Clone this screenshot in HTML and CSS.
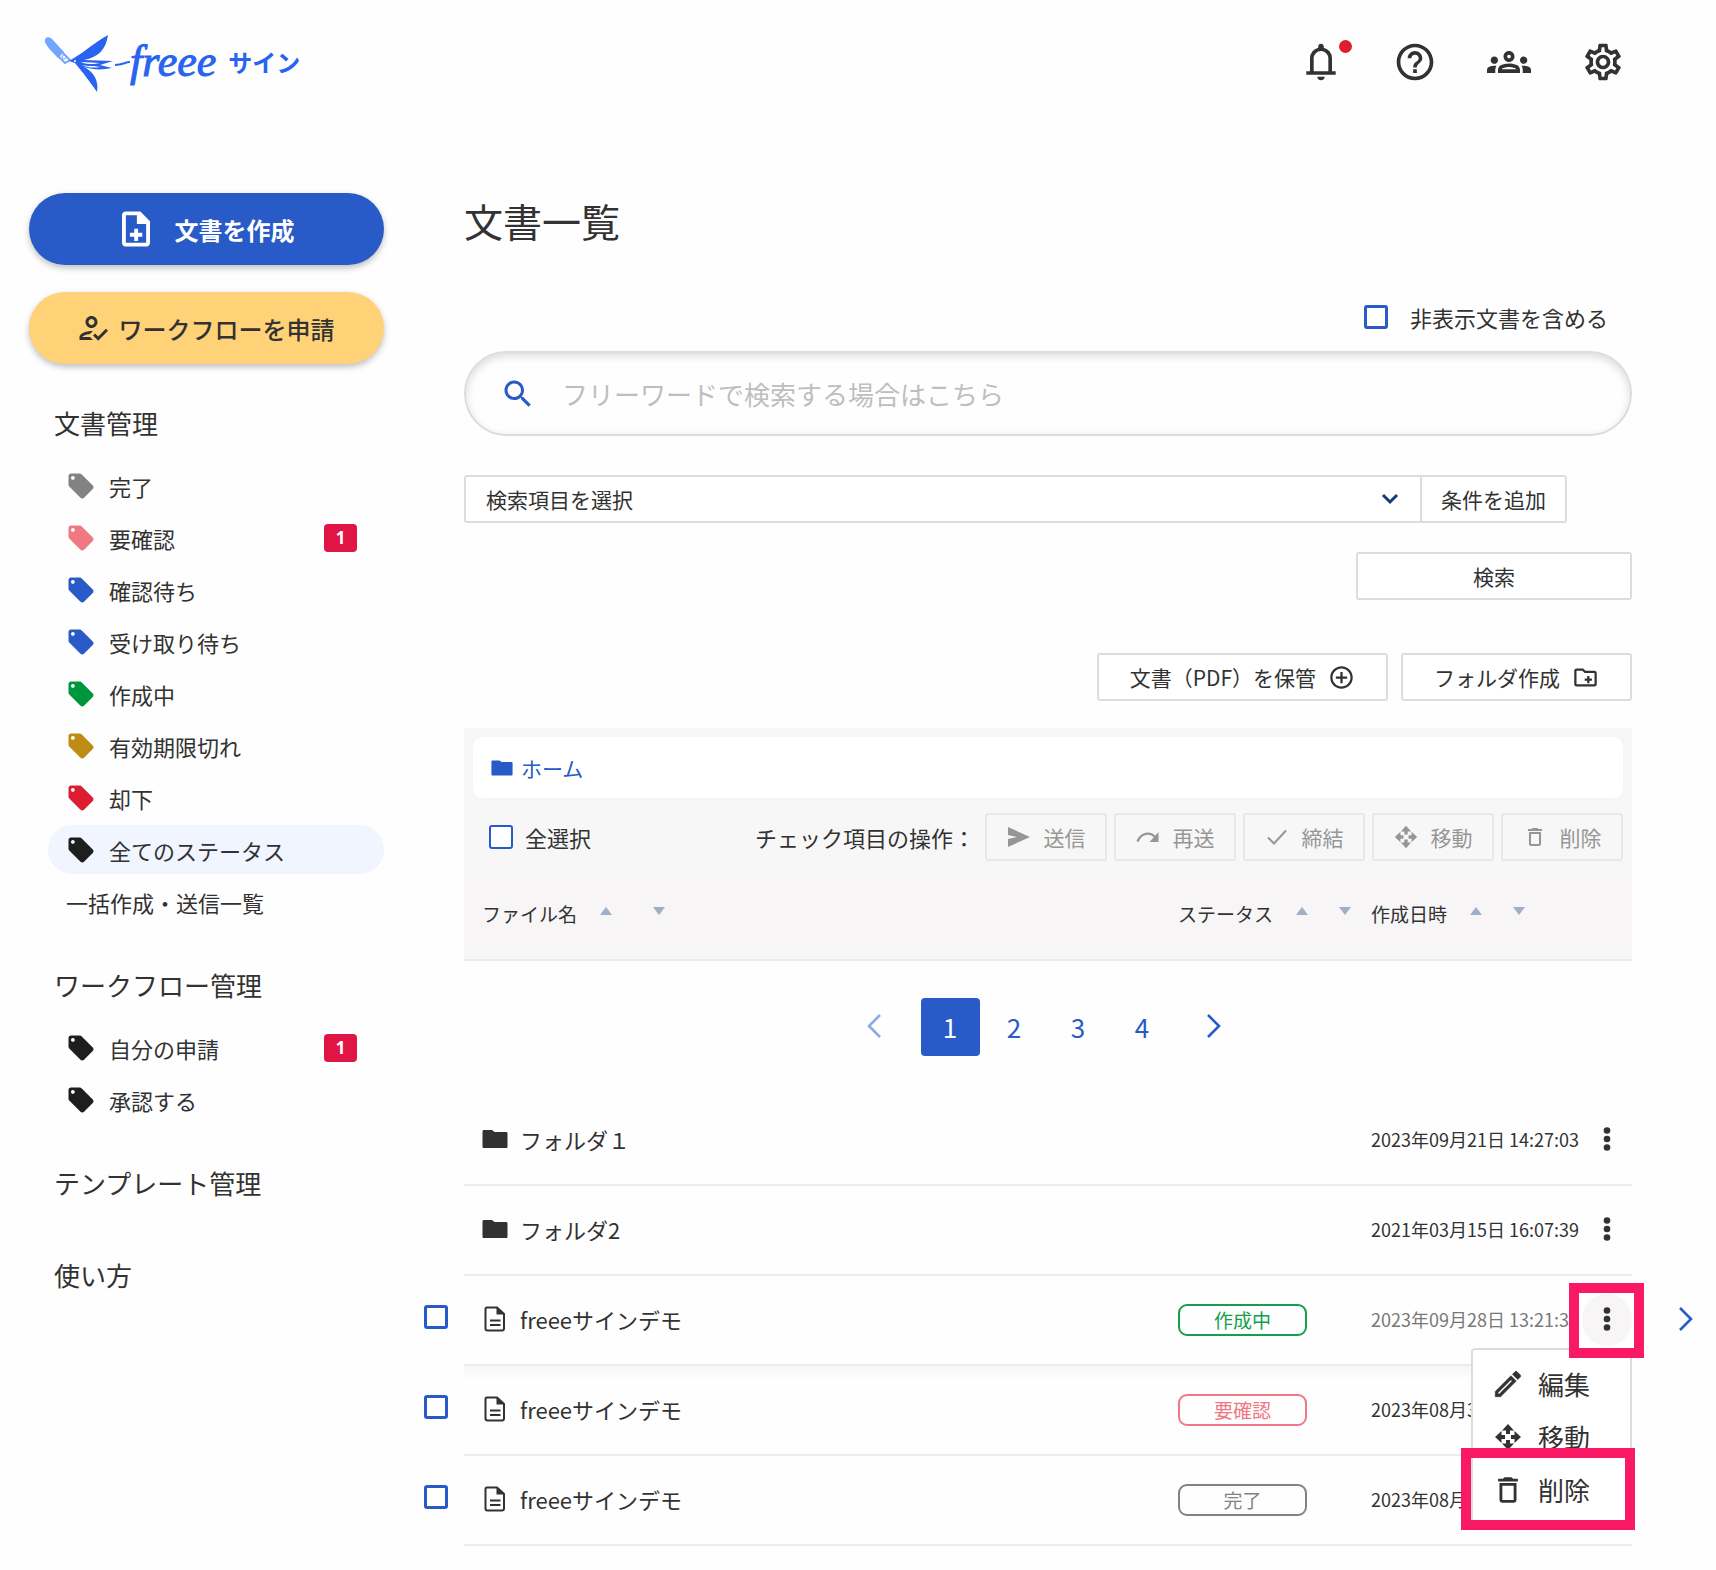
FILE: index.html
```html
<!DOCTYPE html>
<html lang="ja">
<head>
    <meta charset="utf-8">
    <title>文書一覧 | freee サイン</title>
    <meta name="viewport" content="width=device-width, initial-scale=1">
    <link rel="stylesheet" href="styles.css">
</head>
<body>
    <!-- Icon sprite -->
    <svg class="sprite" aria-hidden="true">
        <symbol id="i-bell" viewBox="0 0 24 24"><path d="M4 19v-2h2v-7q0-2.075 1.25-3.687Q8.5 4.7 10.5 4.2v-.7q0-.625.438-1.063Q11.375 2 12 2t1.063.437Q13.5 2.875 13.5 3.5v.7q2 .5 3.25 2.113Q18 7.925 18 10v7h2v2Zm8 3q-.825 0-1.412-.587Q10 20.825 10 20h4q0 .825-.587 1.413Q12.825 22 12 22Zm-4-5h8v-7q0-1.65-1.175-2.825Q13.65 6 12 6q-1.65 0-2.825 1.175Q8 8.35 8 10Z"/></symbol>
        <symbol id="i-help" viewBox="0 0 24 24"><path d="M11 18h2v-2h-2v2zm1-16C6.48 2 2 6.48 2 12s4.48 10 10 10 10-4.48 10-10S17.52 2 12 2zm0 18c-4.41 0-8-3.59-8-8s3.59-8 8-8 8 3.59 8 8-3.59 8-8 8zm0-14c-2.21 0-4 1.79-4 4h2c0-1.1.9-2 2-2s2 .9 2 2c0 2-3 1.75-3 5h2c0-2.25 3-2.5 3-5 0-2.21-1.79-4-4-4z"/></symbol>
        <symbol id="i-groups" viewBox="0 0 24 24"><path d="M4 13c1.1 0 2-.9 2-2s-.9-2-2-2-2 .9-2 2 .9 2 2 2zm1.13 1.1C4.76 14.04 4.39 14 4 14c-.99 0-1.93.21-2.78.58C.48 14.9 0 15.62 0 16.43V18h4.5v-1.61c0-.83.23-1.61.63-2.29zM20 13c1.1 0 2-.9 2-2s-.9-2-2-2-2 .9-2 2 .9 2 2 2zm4 3.43c0-.81-.48-1.53-1.22-1.85C21.93 14.21 20.99 14 20 14c-.39 0-.76.04-1.13.1.4.68.63 1.46.63 2.29V18H24v-1.57zm-7.76-2.78C15.07 13.13 13.63 12.75 12 12.75s-3.07.39-4.24.9C6.68 14.13 6 15.21 6 16.39V18h12v-1.61c0-1.18-.68-2.26-1.76-2.74zM8.07 16c.09-.23.13-.39.91-.69.97-.38 1.99-.56 3.02-.56s2.05.18 3.02.56c.77.3.81.46.91.69H8.07zM12 8c.55 0 1 .45 1 1s-.45 1-1 1-1-.45-1-1 .45-1 1-1m0-2c-1.66 0-3 1.34-3 3s1.34 3 3 3 3-1.34 3-3-1.34-3-3-3z"/></symbol>
        <symbol id="i-gear" viewBox="0 0 24 24"><path d="M19.43 12.98c.04-.32.07-.64.07-.98 0-.34-.03-.66-.07-.98l2.11-1.65c.19-.15.24-.42.12-.64l-2-3.46c-.09-.16-.26-.25-.44-.25-.06 0-.12.01-.17.03l-2.49 1c-.52-.4-1.08-.73-1.69-.98l-.38-2.65C14.46 2.18 14.25 2 14 2h-4c-.25 0-.46.18-.49.42l-.38 2.65c-.61.25-1.17.59-1.69.98l-2.49-1c-.06-.02-.12-.03-.18-.03-.17 0-.34.09-.43.25l-2 3.46c-.13.22-.07.49.12.64l2.11 1.65c-.04.32-.07.65-.07.98 0 .33.03.66.07.98l-2.11 1.65c-.19.15-.24.42-.12.64l2 3.46c.09.16.26.25.44.25.06 0 .12-.01.17-.03l2.49-1c.52.4 1.08.73 1.69.98l.38 2.65c.03.24.24.42.49.42h4c.25 0 .46-.18.49-.42l.38-2.65c.61-.25 1.17-.59 1.69-.98l2.49 1c.06.02.12.03.18.03.17 0 .34-.09.43-.25l2-3.46c.12-.22.07-.49-.12-.64l-2.11-1.65zm-1.98-1.71c.04.31.05.52.05.73 0 .21-.02.43-.05.73l-.14 1.13.89.7 1.08.84-.7 1.21-1.27-.51-1.04-.42-.9.68c-.43.32-.84.56-1.25.73l-1.06.43-.16 1.13-.2 1.35h-1.4l-.19-1.35-.16-1.13-1.06-.43c-.43-.18-.83-.41-1.23-.71l-.91-.7-1.06.43-1.27.51-.7-1.21 1.08-.84.89-.7-.14-1.13c-.03-.31-.05-.54-.05-.74s.02-.43.05-.73l.14-1.13-.89-.7-1.08-.84.7-1.21 1.27.51 1.04.42.9-.68c.43-.32.84-.56 1.25-.73l1.06-.43.16-1.13.2-1.35h1.39l.19 1.35.16 1.13 1.06.43c.43.18.83.41 1.23.71l.91.7 1.06-.43 1.27-.51.7 1.21-1.07.85-.89.7.14 1.13zM12 8c-2.21 0-4 1.79-4 4s1.79 4 4 4 4-1.79 4-4-1.79-4-4-4zm0 6c-1.1 0-2-.9-2-2s.9-2 2-2 2 .9 2 2-.9 2-2 2z"/></symbol>
        <symbol id="i-note-add" viewBox="0 0 24 24"><path d="M13.200 11.800h-2.200v2.400H8.500v2.200H11v2.400h2.200v-2.400h2.400v-2.200h-2.400zM14.500 2H6c-1.100 0-2 .9-2 2v16c0 1.100.89 2 2 2h12c1.100 0 2-.9 2-2V7.500L14.500 2zM17.800 19.800H6.200V4.200H12.500V9.200h5.300v10.600z"/></symbol>
        <symbol id="i-approve" viewBox="0 0 24 24"><path d="M11 12c2.210 0 4-1.790 4-4s-1.790-4-4-4-4 1.790-4 4 1.790 4 4 4zm0-6c1.100 0 2 .9 2 2s-.9 2-2 2-2-.9-2-2 .9-2 2-2zM5 18c.2-.63 2.570-1.680 4.960-1.940l2.040-2c-.39-.04-.68-.06-1-.06-2.670 0-8 1.340-8 4v2h9l-2-2H5zM20.600 12.500l-5.130 5.170-2.070-2.080L12 17l3.470 3.500L22 13.910z"/></symbol>
        <symbol id="i-tag" viewBox="0 0 24 24"><path d="M21.410 11.580l-9-9C12.050 2.220 11.550 2 11 2H4c-1.100 0-2 .9-2 2v7c0 .55.22 1.050.59 1.420l9 9c.36.36.86.58 1.410.58.55 0 1.050-.22 1.410-.59l7-7c.37-.36.59-.86.59-1.410 0-.55-.23-1.060-.59-1.420zM5.500 7C4.670 7 4 6.330 4 5.500S4.670 4 5.500 4 7 4.670 7 5.500 6.330 7 5.500 7z"/></symbol>
        <symbol id="i-search" viewBox="0 0 24 24"><path d="M15.500 14h-.79l-.28-.27C15.410 12.590 16 11.110 16 9.500 16 5.910 13.090 3 9.500 3S3 5.910 3 9.500 5.910 16 9.500 16c1.610 0 3.090-.59 4.230-1.570l.27.28v.79l5 4.990L20.490 19l-4.990-5zm-6 0C7.010 14 5 11.990 5 9.500S7.010 5 9.500 5 14 7.010 14 9.500 11.990 14 9.500 14z"/></symbol>
        <symbol id="i-down" viewBox="0 0 18 12"><path d="M2 2l7 7 7-7" fill="none" stroke="currentColor" stroke-width="3"/></symbol>
        <symbol id="i-plus" viewBox="0 0 24 24"><path d="M13 7h-2v4H7v2h4v4h2v-4h4v-2h-4V7zm-1-5C6.480 2 2 6.480 2 12s4.480 10 10 10 10-4.480 10-10S17.520 2 12 2zm0 18c-4.410 0-8-3.590-8-8s3.590-8 8-8 8 3.590 8 8-3.590 8-8 8z"/></symbol>
        <symbol id="i-folder-add" viewBox="0 0 24 24"><path d="M20 6h-8l-2-2H4c-1.110 0-2 .89-2 2v12c0 1.110.89 2 2 2h16c1.110 0 2-.89 2-2V8c0-1.110-.89-2-2-2zm0 12H4V6h5.170l2 2H20v10zm-6.500-1h2v-2.200h2.200v-2h-2.200v-2.200h-2v2.200h-2.200v2h2.200z"/></symbol>
        <symbol id="i-folder" viewBox="0 0 26 20"><path d="M2 1h8l2.500 2H24c1 0 1.500.6 1.500 1.500v13c0 1-.5 1.500-1.500 1.500H2c-1 0-1.500-.5-1.500-1.500v-15C.5 1.600 1 1 2 1z"/></symbol>
        <symbol id="i-doc" viewBox="0 0 22 26"><path d="M3 1.500h10l7 6.500v14.500c0 1.100-.9 2-2 2H3.500c-1.100 0-2-.9-2-2V3c0-.8.700-1.500 1.500-1.500z" fill="none" stroke="currentColor" stroke-width="2"/><path d="M12.500 1v7.500H21z"/><path d="M6 14.500h10.500M6 19h10.500" stroke="currentColor" stroke-width="2"/></symbol>
        <symbol id="i-send" viewBox="0 0 24 22"><path d="M1 1l22 10L1 21v-8l9-2-9-2z"/></symbol>
        <symbol id="i-redo" viewBox="0 0 24 16"><path d="M1.500 12.500C5 4 14 2 19.500 8.500" fill="none" stroke="currentColor" stroke-width="2.200"/><path d="M22.500 3v10H13.500z"/></symbol>
        <symbol id="i-check" viewBox="0 0 24 20"><path d="M3 10.500l6 6L21 3.500" fill="none" stroke="currentColor" stroke-width="2"/></symbol>
        <symbol id="i-move" viewBox="0 0 28 28"><path d="M14 1l6 6.500h-4V11h-4V7.500H8zM14 27l6-6.500h-4V17h-4v3.500H8zM1 14l6.500-6v4H11v4H7.500v4zM27 14l-6.500-6v4H17v4h3.500v4z"/></symbol>
        <symbol id="i-delete" viewBox="0 0 24 24"><path d="M16 9v10H8V9h8m-1.500-6h-5l-1 1H5v2h14V4h-3.500l-1-1zM18 7H6v12c0 1.100.9 2 2 2h8c1.100 0 2-.9 2-2V7z"/></symbol>
        <symbol id="i-edit" viewBox="0 0 24 24"><path d="M14.060 9.020l.92.92L5.920 19H5v-.92l9.060-9.060M17.660 3c-.25 0-.51.1-.7.29l-1.830 1.830 3.750 3.750 1.830-1.830c.39-.39.39-1.020 0-1.410l-2.340-2.340c-.2-.2-.45-.29-.71-.29zm-3.600 3.190L3 17.250V21h3.750L17.810 9.940l-3.750-3.750z" stroke="currentColor" stroke-width=".4"/></symbol>
        <symbol id="i-up-tri" viewBox="0 0 12 8"><path d="M6 0l6 8H0z"/></symbol>
        <symbol id="i-down-tri" viewBox="0 0 12 8"><path d="M0 0h12L6 8z"/></symbol>
        <symbol id="i-prev" viewBox="0 0 16 26"><path d="M14 2L3 13l11 11" fill="none" stroke="currentColor" stroke-width="2.600"/></symbol>
        <symbol id="i-next" viewBox="0 0 16 26"><path d="M2 2l11 11L2 24" fill="none" stroke="currentColor" stroke-width="2.600"/></symbol>
        <symbol id="i-more" viewBox="0 0 8 24"><circle cx="4" cy="3.500" r="3.300"/><circle cx="4" cy="12" r="3.300"/><circle cx="4" cy="20.500" r="3.300"/></symbol>
    </svg>

    <header class="site-header">
        <a class="logo" href="#">
            <svg class="logo-bird" viewBox="0 0 86 68">
                <path d="M1 14C0 9 5 8 8 11L20 24l-6 6C9 25 3 19 1 14z" fill="#73a5ff"/>
                <path d="M18 24l8 8-5 3-7-7z" fill="none" stroke="#73a5ff" stroke-width="2"/>
                <circle cx="20" cy="29" r="2" fill="none" stroke="#73a5ff"/>
                <path d="M25 33l5-3C42 23 48 16 64 7c-2 14-9 22-24 25l29 1-13 4 12 3c-9 2-19 2-28-1 10 5 15 14 13 25C46 54 40 46 31 35z" fill="#2864f0"/>
                <path d="M37 34l19 1-6 1c-5 0-9 0-13-2zM38 37c6 3 13 3 18 2l-6-1c-4 0-8 0-12-1z" fill="#fff"/>
                <circle cx="31" cy="33" r="1" fill="#fff"/>
                <path d="M71 37c8 0 10-3 15-3" fill="none" stroke="#2864f0" stroke-width="2"/>
            </svg>
            <span class="logo-name">freee</span>
            <span class="logo-product">サイン</span>
        </a>
        <div class="header-actions">
            <button class="icon-button" type="button" aria-label="通知"><svg class="icon-lg"><use href="#i-bell"/></svg><span class="notice-dot"></span></button>
            <button class="icon-button" type="button" aria-label="ヘルプ"><svg class="icon-lg"><use href="#i-help"/></svg></button>
            <button class="icon-button" type="button" aria-label="メンバー"><svg class="icon-lg"><use href="#i-groups"/></svg></button>
            <button class="icon-button" type="button" aria-label="設定"><svg class="icon-lg"><use href="#i-gear"/></svg></button>
        </div>
    </header>

    <div class="page">
        <aside class="sidebar">
            <button class="pill-button primary" type="button"><svg class="icon-note"><use href="#i-note-add"/></svg>文書を作成</button>
            <button class="pill-button secondary" type="button"><svg class="icon-approve"><use href="#i-approve"/></svg>ワークフローを申請</button>
            <nav>
                <h2>文書管理</h2>
                <ul class="nav-list">
                    <li><a href="#"><svg class="tag gray"><use href="#i-tag"/></svg>完了</a></li>
                    <li><a href="#"><svg class="tag pink"><use href="#i-tag"/></svg>要確認<span class="badge">1</span></a></li>
                    <li><a href="#"><svg class="tag blue"><use href="#i-tag"/></svg>確認待ち</a></li>
                    <li><a href="#"><svg class="tag blue"><use href="#i-tag"/></svg>受け取り待ち</a></li>
                    <li><a href="#"><svg class="tag green"><use href="#i-tag"/></svg>作成中</a></li>
                    <li><a href="#"><svg class="tag gold"><use href="#i-tag"/></svg>有効期限切れ</a></li>
                    <li><a href="#"><svg class="tag red"><use href="#i-tag"/></svg>却下</a></li>
                    <li><a class="active" href="#"><svg class="tag"><use href="#i-tag"/></svg>全てのステータス</a></li>
                    <li><a href="#">一括作成・送信一覧</a></li>
                </ul>
                <h2>ワークフロー管理</h2>
                <ul class="nav-list">
                    <li><a href="#"><svg class="tag"><use href="#i-tag"/></svg>自分の申請<span class="badge">1</span></a></li>
                    <li><a href="#"><svg class="tag"><use href="#i-tag"/></svg>承認する</a></li>
                </ul>
                <h2><a href="#">テンプレート管理</a></h2>
                <h2 class="nav-help"><a href="#">使い方</a></h2>
            </nav>
        </aside>

        <main class="main">
            <h1>文書一覧</h1>
            <label class="hidden-toggle"><input type="checkbox" class="checkbox">非表示文書を含める</label>
            <div class="search-box">
                <svg class="icon-search"><use href="#i-search"/></svg>
                <input type="search" placeholder="フリーワードで検索する場合はこちら" aria-label="フリーワード">
            </div>
            <div class="filter-row">
                <div class="select-wrap">
                    <select aria-label="検索項目">
                        <option>検索項目を選択</option>
                    </select>
                    <svg class="select-arrow"><use href="#i-down"/></svg>
                </div>
                <button class="button add-filter" type="button">条件を追加</button>
            </div>
            <div class="submit-row">
                <button class="button submit" type="submit">検索</button>
            </div>
            <div class="create-row">
                <button class="button" type="button">文書（PDF）を保管<svg class="icon-md"><use href="#i-plus"/></svg></button>
                <button class="button" type="button">フォルダ作成<svg class="icon-md"><use href="#i-folder-add"/></svg></button>
            </div>

            <div class="list-head">
                <div class="breadcrumb"><a href="#"><svg class="icon-home"><use href="#i-folder"/></svg>ホーム</a></div>
                <div class="toolbar">
                    <label class="select-all"><input type="checkbox" class="checkbox thin">全選択</label>
                    <span class="toolbar-label">チェック項目の操作：</span>
                    <div class="toolbar-buttons">
                        <button class="button" type="button" disabled><svg class="icon-sm"><use href="#i-send"/></svg>送信</button>
                        <button class="button" type="button" disabled><svg class="icon-sm"><use href="#i-redo"/></svg>再送</button>
                        <button class="button" type="button" disabled><svg class="icon-sm"><use href="#i-check"/></svg>締結</button>
                        <button class="button" type="button" disabled><svg class="icon-sm"><use href="#i-move"/></svg>移動</button>
                        <button class="button" type="button" disabled><svg class="icon-sm"><use href="#i-delete"/></svg>削除</button>
                    </div>
                </div>
            </div>

            <table class="documents">
                <thead>
                    <tr>
                        <td class="col-check"></td>
                        <th class="col-name"><div class="sort">ファイル名<button type="button" aria-label="昇順"><svg><use href="#i-up-tri"/></svg></button><button type="button" aria-label="降順"><svg><use href="#i-down-tri"/></svg></button></div></th>
                        <th class="col-status"><div class="sort">ステータス<button type="button" aria-label="昇順"><svg><use href="#i-up-tri"/></svg></button><button type="button" aria-label="降順"><svg><use href="#i-down-tri"/></svg></button></div></th>
                        <th class="col-date"><div class="sort">作成日時<button type="button" aria-label="昇順"><svg><use href="#i-up-tri"/></svg></button><button type="button" aria-label="降順"><svg><use href="#i-down-tri"/></svg></button></div></th>
                        <th class="col-menu"></th>
                        <td class="col-open"></td>
                    </tr>
                </thead>
                <tbody>
                    <tr class="pager-row">
                        <td></td>
                        <td colspan="4">
                            <nav class="pager">
                                <a class="prev" href="#" aria-label="前へ"><svg><use href="#i-prev"/></svg></a>
                                <a class="current" href="#">1</a>
                                <a href="#">2</a>
                                <a href="#">3</a>
                                <a href="#">4</a>
                                <a class="next" href="#" aria-label="次へ"><svg><use href="#i-next"/></svg></a>
                            </nav>
                        </td>
                        <td></td>
                    </tr>
                    <tr class="row">
                        <td class="col-check"></td>
                        <td class="col-name"><a href="#"><svg class="icon-folder"><use href="#i-folder"/></svg>フォルダ１</a></td>
                        <td></td>
                        <td class="col-date">2023年09月21日 14:27:03</td>
                        <td class="col-menu"><button class="more" type="button" aria-label="メニュー"><svg><use href="#i-more"/></svg></button></td>
                        <td class="col-open"></td>
                    </tr>
                    <tr class="row">
                        <td class="col-check"></td>
                        <td class="col-name"><a href="#"><svg class="icon-folder"><use href="#i-folder"/></svg>フォルダ2</a></td>
                        <td></td>
                        <td class="col-date">2021年03月15日 16:07:39</td>
                        <td class="col-menu"><button class="more" type="button" aria-label="メニュー"><svg><use href="#i-more"/></svg></button></td>
                        <td class="col-open"></td>
                    </tr>
                    <tr class="row hovered">
                        <td class="col-check"><input type="checkbox" class="checkbox" aria-label="freeeサインデモを選択"></td>
                        <td class="col-name"><a href="#"><svg class="icon-doc"><use href="#i-doc"/></svg>freeeサインデモ</a></td>
                        <td><span class="status green">作成中</span></td>
                        <td class="col-date">2023年09月28日 13:21:30</td>
                        <td class="col-menu">
                            <button class="more" type="button" aria-label="メニュー"><svg><use href="#i-more"/></svg></button>
                            <span class="marker marker-more"></span>
                            <ul class="menu">
                                <li><button type="button"><svg class="icon-edit"><use href="#i-edit"/></svg>編集</button></li>
                                <li><button type="button"><svg class="icon-move"><use href="#i-move"/></svg>移動</button></li>
                                <li><button type="button"><svg class="icon-edit"><use href="#i-delete"/></svg>削除</button><span class="marker marker-delete"></span></li>
                            </ul>
                        </td>
                        <td class="col-open"><a href="#" aria-label="開く"><svg><use href="#i-next"/></svg></a></td>
                    </tr>
                    <tr class="row">
                        <td class="col-check"><input type="checkbox" class="checkbox" aria-label="freeeサインデモを選択"></td>
                        <td class="col-name"><a href="#"><svg class="icon-doc"><use href="#i-doc"/></svg>freeeサインデモ</a></td>
                        <td><span class="status pink">要確認</span></td>
                        <td class="col-date">2023年08月3</td>
                        <td class="col-menu"></td>
                        <td class="col-open"></td>
                    </tr>
                    <tr class="row">
                        <td class="col-check"><input type="checkbox" class="checkbox" aria-label="freeeサインデモを選択"></td>
                        <td class="col-name"><a href="#"><svg class="icon-doc"><use href="#i-doc"/></svg>freeeサインデモ</a></td>
                        <td><span class="status gray">完了</span></td>
                        <td class="col-date">2023年08月</td>
                        <td class="col-menu"></td>
                        <td class="col-open"></td>
                    </tr>
                </tbody>
            </table>
        </main>
    </div>
</body>
</html>
```

FILE: styles.css
```css
* {
    box-sizing: border-box;
}

body {
    margin: 0;
    background: #fefefe;
    color: #323232;
    font-family: "Noto Sans CJK JP", sans-serif;
    font-size: 22px;
    overflow-x: hidden;
}

a {
    color: inherit;
    text-decoration: none;
}

button,
input,
select {
    font-family: inherit;
    color: inherit;
}

button {
    cursor: pointer;
}

svg {
    display: block;
    flex: none;
    fill: currentColor;
}

.sprite {
    display: none;
}

/* Header */
.site-header {
    display: flex;
    justify-content: space-between;
    align-items: center;
    padding: 28px 91px 97px 44px;
}

.logo {
    display: flex;
    align-items: center;
    color: #2864f0;
}

.logo-bird {
    width: 86px;
    height: 68px;
}

.logo-name {
    font-family: "Liberation Serif", serif;
    font-size: 44px;
    font-style: italic;
    line-height: 64px;
    -webkit-text-stroke: 1px currentColor;
}

.logo-product {
    margin-left: 12px;
    font-size: 24px;
    font-weight: 700;
    line-height: 64px;
}

.header-actions {
    display: flex;
    gap: 50px;
}

.icon-button {
    position: relative;
    padding: 0;
    border: 0;
    background: none;
}

.icon-lg {
    width: 44px;
    height: 44px;
}

.notice-dot {
    position: absolute;
    top: 0;
    right: -9px;
    width: 13px;
    height: 13px;
    border-radius: 50%;
    background: #dc1e32;
}

/* Layout */
.page {
    display: grid;
    grid-template-columns: 355px minmax(0, 1fr);
    gap: 80px;
    padding: 0 84px 24px 29px;
}

/* Sidebar */
.pill-button {
    display: flex;
    align-items: center;
    justify-content: center;
    width: 100%;
    height: 72px;
    padding: 0 4px 0 0;
    border: 0;
    border-radius: 36px;
    font-size: 24px;
    box-shadow: 0 3px 6px rgba(0,0,0,.25);
}

.pill-button.primary {
    gap: 18px;
    background: #285ac8;
    color: #fff;
    font-weight: 700;
}

.pill-button.secondary {
    gap: 8px;
    margin-top: 27px;
    background: #ffd278;
    font-weight: 500;
}

.icon-note {
    width: 42px;
    height: 42px;
}

.icon-approve {
    width: 36px;
    height: 36px;
}

.sidebar h2 {
    margin: 40px 0 0;
    padding-left: 25px;
    font-size: 26px;
    font-weight: 400;
    line-height: 38px;
}

.sidebar .nav-help {
    margin-top: 54px;
}

.nav-list {
    display: flex;
    flex-direction: column;
    gap: 3px;
    margin: 19px 0 0;
    padding: 0 0 0 19px;
    list-style: none;
}

.nav-list a {
    display: flex;
    align-items: center;
    height: 49px;
    padding: 0 27px 0 18px;
    border-radius: 25px;
}

.nav-list .active {
    background: #f0f5ff;
}

.tag {
    width: 30px;
    height: 30px;
    margin-right: 13px;
    color: #1e1e1e;
}

.tag.gray { color: #828282; }
.tag.pink { color: #f07882; }
.tag.blue { color: #285ac8; }
.tag.green { color: #00963c; }
.tag.gold { color: #be8c14; }
.tag.red { color: #dc1e32; }

.badge {
    width: 33px;
    margin-left: auto;
    border-radius: 4px;
    background: #e11446;
    color: #fff;
    font-family: "Open Sans", sans-serif;
    font-size: 17px;
    font-weight: 700;
    line-height: 28px;
    text-align: center;
}

/* Search */
h1 {
    margin: 0;
    font-size: 39px;
    font-weight: 400;
    line-height: 54px;
}

.checkbox {
    appearance: none;
    width: 24px;
    height: 24px;
    margin: 0;
    border: 3px solid #285ac8;
    border-radius: 3px;
    background: #fff;
}

.checkbox.thin {
    border-width: 2px;
}

.hidden-toggle {
    display: flex;
    align-items: center;
    justify-content: flex-end;
    gap: 22px;
    margin-top: 55px;
    padding-right: 24px;
    line-height: 30px;
}

.search-box {
    display: flex;
    align-items: center;
    height: 85px;
    margin-top: 19px;
    padding: 0 34px;
    border: 2px solid #dcdcdc;
    border-radius: 43px;
    box-shadow: inset 0 3px 8px rgba(0,0,0,.14);
}

.icon-search {
    width: 36px;
    height: 36px;
    color: #285ac8;
}

.search-box input {
    flex: 1;
    margin-left: 26px;
    padding: 0;
    border: 0;
    outline: none;
    background: none;
    font-size: 26px;
}

.search-box input::placeholder {
    color: #bebebe;
    opacity: 1;
}

.button {
    display: flex;
    align-items: center;
    justify-content: center;
    height: 48px;
    padding: 0;
    border: 2px solid #dcdcdc;
    border-radius: 3px;
    background: #fff;
    font-size: 21px;
    white-space: nowrap;
}

.filter-row {
    display: flex;
    margin: 39px 65px 0 0;
}

.select-wrap {
    position: relative;
    flex: 1;
}

.select-wrap select {
    appearance: none;
    width: 100%;
    height: 48px;
    padding: 0 20px;
    border: 2px solid #dcdcdc;
    border-right: 0;
    border-radius: 3px 0 0 3px;
    background: #fff;
    font-size: 21px;
}

.select-arrow {
    position: absolute;
    top: 18px;
    right: 21px;
    width: 18px;
    height: 12px;
    color: #143c78;
    pointer-events: none;
}

.add-filter {
    width: 147px;
    border-radius: 0 3px 3px 0;
}

.submit-row {
    display: flex;
    justify-content: flex-end;
    margin-top: 29px;
}

.submit {
    width: 276px;
}

.create-row {
    display: flex;
    justify-content: flex-end;
    gap: 13px;
    margin-top: 53px;
}

.create-row .button {
    gap: 12px;
    padding: 0 31px;
}

.icon-md {
    width: 27px;
    height: 27px;
}

/* List header */
.list-head {
    margin-top: 27px;
    padding-top: 9px;
    background: #f7f5f6;
}

.breadcrumb {
    display: flex;
    align-items: center;
    height: 61px;
    margin: 0 9px 9px;
    padding: 0 18px;
    border-radius: 9px;
    background: #fff;
    color: #285ac8;
    font-size: 21px;
}

.breadcrumb a {
    display: flex;
    align-items: center;
    gap: 8px;
}

.icon-home {
    width: 22px;
    height: 20px;
}

.toolbar {
    display: flex;
    align-items: center;
    height: 61px;
    padding: 0 9px 2px 25px;
    background: #f7f7f7;
}

.select-all {
    display: flex;
    align-items: center;
    gap: 12px;
}

.toolbar-label {
    margin-left: auto;
}

.toolbar-buttons {
    display: flex;
    gap: 7px;
    margin-left: 10px;
}

.toolbar .button {
    gap: 13px;
    width: 122px;
    border-color: #e8e8e8;
    background: #f7f7f7;
    color: #969696;
}

.icon-sm {
    width: 24px;
    height: 24px;
}

/* Documents table. The outer columns hang outside the main column. */
.documents {
    width: calc(100% + 124px);
    margin: 0 -84px 0 -40px;
    border-collapse: separate;
    border-spacing: 0;
    table-layout: fixed;
}

.documents td,
.documents th {
    padding: 0;
    text-align: left;
    vertical-align: middle;
}

.documents th {
    height: 93px;
    background: #f7f5f6;
    border-bottom: 2px solid #e6ebeb;
    font-size: 19px;
    font-weight: 400;
}

.documents .col-check {
    width: 40px;
}

.documents .col-name {
    padding-left: 18px;
}

.col-status {
    width: 193px;
}

.col-date {
    width: 211px;
}

.col-menu {
    width: 50px;
}

.col-open {
    width: 84px;
}

.sort {
    display: flex;
    align-items: center;
}

.sort button {
    margin-left: 31px;
    padding: 0 0 6px;
    border: 0;
    background: none;
    color: #a0afc8;
}

.sort button:first-of-type {
    margin-left: 23px;
}

.col-name .sort button:last-of-type {
    margin-left: 41px;
}

.sort svg {
    width: 12px;
    height: 8px;
}

.pager {
    display: flex;
    align-items: center;
    justify-content: center;
    gap: 5px;
    padding: 37px 8px 40px 0;
    color: #285ac8;
    font-size: 26px;
}

.pager a {
    display: flex;
    align-items: center;
    justify-content: center;
    width: 59px;
    height: 58px;
    padding-bottom: 2px;
    border-radius: 4px;
}

.pager .current {
    background: #285ac8;
    color: #fff;
}

.pager svg {
    width: 16px;
    height: 26px;
}

.pager .prev {
    margin-right: 12px;
    color: #8caae6;
}

.pager .next {
    margin-left: 8px;
}

.row td {
    height: 90px;
    border-bottom: 2px solid #e8edf0;
}

.documents .row .col-name,
.documents .row .col-date {
    padding-bottom: 3px;
}

.documents .row .col-check,
.documents .row .col-open {
    border-bottom: 0;
}

.documents .row .col-check {
    padding-bottom: 4px;
}

/* soft shadow below the hovered row */
.hovered + .row td:not(.col-check):not(.col-open) {
    background: linear-gradient(#f6f6f6, #fefefe 14px);
}

.row .col-name a {
    display: flex;
    align-items: center;
}

.icon-folder {
    width: 26px;
    height: 20px;
    margin-right: 12px;
}

.icon-doc {
    width: 22px;
    height: 26px;
    margin: 0 14px 0 2px;
}

.status {
    display: block;
    width: 129px;
    border: 2px solid currentColor;
    border-radius: 9px;
    font-size: 19px;
    line-height: 28px;
    text-align: center;
}

.status.green { color: #14a04b; }
.status.pink { color: #f07882; }
.status.gray { color: #828282; }

.row .col-date {
    font-size: 18px;
    white-space: nowrap;
}

.hovered .col-date {
    color: #787878;
}

.row .col-menu {
    position: relative;
}

.more {
    display: flex;
    align-items: center;
    justify-content: center;
    width: 50px;
    height: 52px;
    padding: 0 0 2px;
    border: 0;
    border-radius: 50%;
    background: none;
}

.hovered .more {
    background: #f7f5f6;
}

.more svg {
    width: 8px;
    height: 24px;
}

.col-open a {
    display: block;
    padding: 0 0 4px 46px;
    color: #285ac8;
}

.col-open svg {
    width: 16px;
    height: 26px;
}

/* Row menu */
.menu {
    position: absolute;
    top: 72px;
    right: 0;
    z-index: 2;
    width: 161px;
    margin: 0;
    padding: 7px 0 10px;
    border: 2px solid #dcdcdc;
    border-radius: 4px;
    background: #fff;
    list-style: none;
}

.menu li {
    position: relative;
}

.menu button {
    display: flex;
    align-items: center;
    gap: 13px;
    width: 100%;
    height: 53px;
    padding: 0 18px;
    border: 0;
    background: none;
    font-size: 26px;
}

.icon-edit {
    width: 34px;
    height: 34px;
}

.icon-move {
    width: 28px;
    height: 28px;
    margin: 0 3px;
}

.marker {
    position: absolute;
    z-index: 3;
    border: 10px solid #fa1964;
    pointer-events: none;
}

.marker-more {
    top: 7px;
    right: -12px;
    width: 75px;
    height: 75px;
}

.marker-delete {
    top: -15px;
    bottom: -14px;
    left: -12px;
    right: -5px;
}
```
